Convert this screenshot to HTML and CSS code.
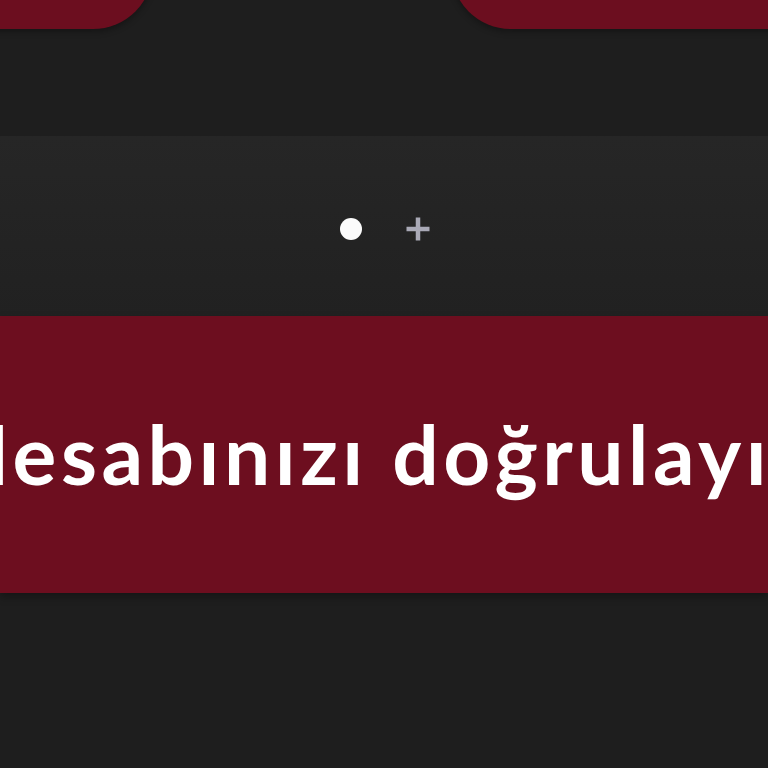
FILE: index.html
```html
<!DOCTYPE html>
<html lang="tr">
<head>
<meta charset="utf-8">
<title>Hesabınızı doğrulayın</title>
<link rel="stylesheet" href="styles.css">
</head>
<body>
<div class="page">
  <div class="top-actions">
    <div class="pill pill-left"></div>
    <div class="pill pill-right"></div>
  </div>
  <div class="pager">
    <span class="dot"></span>
    <svg class="plus" width="28" height="28" viewBox="0 0 28 28" aria-hidden="true">
      <path d="M14 2.5V25.5M2.5 14H25.5" stroke="#a9a9b6" stroke-width="4.5" stroke-linecap="butt"/>
    </svg>
  </div>
  <div class="banner">
    <h1 class="banner-title">Hesabınızı doğrulayın</h1>
  </div>
</div>
</body>
</html>
```
FILE: styles.css
```css
html, body {
  margin: 0;
  padding: 0;
  background: #1e1e1e;
  overflow: hidden;
}
.page {
  width: 768px;
  height: 768px;
  overflow: hidden;
  background: #1e1e1e;
}
.top-actions {
  display: flex;
  gap: 298px;
  margin: -91px -100px 0 -100px;
  height: 120px;
}
.pill {
  background: #6c0e1f;
  border-radius: 60px;
  height: 120px;
  box-shadow: 0 3px 6px rgba(0,0,0,0.3);
}
.pill-left {
  flex: 0 0 253px;
}
.pill-right {
  flex: 1 1 auto;
}
.pager {
  margin-top: 107px;
  height: 180px;
  box-sizing: border-box;
  padding: 5px 0 0 4px;
  background: linear-gradient(#262626, #212121);
  display: flex;
  align-items: center;
  justify-content: center;
  gap: 42px;
}
.dot {
  width: 22px;
  height: 22px;
  border-radius: 50%;
  background: #fbfbfb;
  display: block;
}
.plus {
  display: block;
}
.banner {
  height: 277px;
  box-sizing: border-box;
  padding-bottom: 4px;
  background: #6d0e1f;
  display: flex;
  align-items: center;
  justify-content: center;
  overflow: hidden;
  box-shadow: 0 4px 8px rgba(0,0,0,0.3);
}
.banner-title {
  margin: 0;
  white-space: nowrap;
  font-family: "Lato", "Noto Sans", sans-serif;
  font-weight: 700;
  font-size: 82px;
  letter-spacing: 4.5px;
  color: #ffffff;
  line-height: 1;
}
```
